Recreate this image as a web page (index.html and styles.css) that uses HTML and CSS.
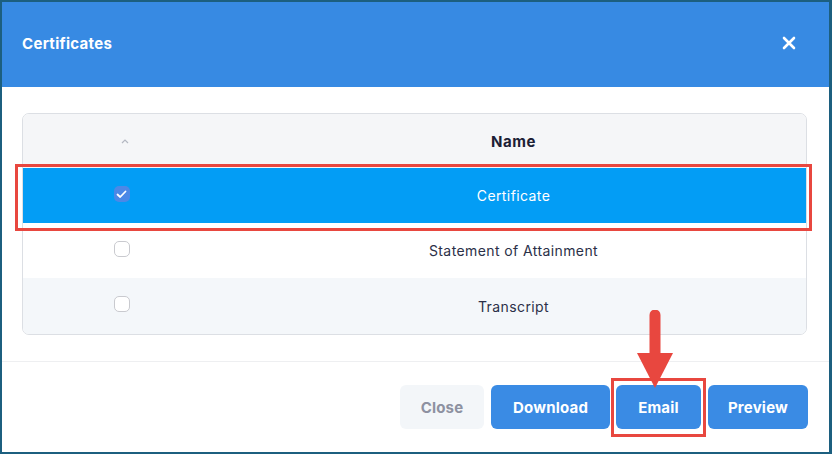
FILE: index.html
```html
<!DOCTYPE html>
<html>
<head>
<meta charset="utf-8">
<link rel="stylesheet" href="styles.css">
</head>
<body>
<div class="modal">
  <div class="modal-header">
    <h1 class="title">Certificates</h1>
    <button class="close-x" aria-label="Close">
      <svg width="14" height="14" viewBox="0 0 14 14"><path d="M2 2 L12 12 M12 2 L2 12" stroke="#fff" stroke-width="2.6" stroke-linecap="round"/></svg>
    </button>
  </div>
  <div class="modal-body">
    <div class="table">
      <div class="row head">
        <div class="cell sel"><svg class="sort" width="8" height="6" viewBox="0 0 8 6"><path d="M1 5 L4 2 L7 5" fill="none" stroke="#b4b8c2" stroke-width="1.2"/></svg></div>
        <div class="cell name">Name</div>
      </div>
      <div class="row selected">
        <div class="cell sel"><span class="check on"><svg width="11" height="9" viewBox="0 0 11 9"><path d="M1.5 4.5 L4.2 7 L9.5 1.5" fill="none" stroke="#fff" stroke-width="1.8" stroke-linecap="round" stroke-linejoin="round"/></svg></span></div>
        <div class="cell name">Certificate</div>
      </div>
      <div class="row">
        <div class="cell sel"><span class="check"></span></div>
        <div class="cell name">Statement of Attainment</div>
      </div>
      <div class="row alt">
        <div class="cell sel"><span class="check"></span></div>
        <div class="cell name">Transcript</div>
      </div>
    </div>
  </div>
  <div class="modal-footer">
    <button class="btn light">Close</button>
    <button class="btn primary">Download</button>
    <button class="btn primary email">Email</button>
    <button class="btn primary">Preview</button>
  </div>
  <div class="mark row-mark"></div>
  <div class="mark btn-mark"></div>
  <svg class="arrow" width="40" height="82" viewBox="0 0 40 82">
    <path d="M20 5 L20 48" stroke="#e8473f" stroke-width="11" stroke-linecap="round"/>
    <path d="M2 43 L38 43 L20 78 Z" fill="#e8473f"/>
  </svg>
</div>
</body>
</html>
```

FILE: styles.css
```css
* { box-sizing: border-box; }
html, body { margin: 0; padding: 0; background: #fff; }
body { font-family: "Inter", "Open Sans", sans-serif; color: #2b3048; }

.modal {
  position: relative;
  width: 832px;
  height: 454px;
  border: 2px solid #1c5f7f;
  border-right-width: 3px;
  background: #fff;
  display: flex;
  flex-direction: column;
}

.modal-header {
  height: 85px;
  background: #378ae3;
  display: flex;
  align-items: center;
  justify-content: space-between;
  padding: 0 33px 0 20px;
}
.title {
  margin: 0;
  color: #fff;
  font-size: 15px;
  font-weight: 700;
  letter-spacing: 0.3px;
  padding-bottom: 2px;
}
.close-x {
  border: 0;
  background: transparent;
  padding: 0;
  width: 14px;
  height: 14px;
  display: flex;
  margin-bottom: 4px;
}

.modal-body {
  padding: 26px 22px 26px 20px;
  border-bottom: 1px solid #eeeff1;
}
.table {
  border: 1px solid #dcdfe4;
  border-radius: 7px;
  overflow: hidden;
}
.row {
  display: flex;
  height: 55px;
  align-items: center;
  background: #fff;
}
.row.head { background: #f5f6f8; height: 54px; }
.row.selected { background: #039df5; color: #fff; }
.row.alt { background: #f4f7fa; height: 56px; }
.cell.sel {
  width: 198px;
  display: flex;
  justify-content: center;
  align-items: center;
}
.cell.name {
  flex: 1;
  text-align: center;
  font-size: 14px;
  letter-spacing: 0.4px;
}
.row.head .cell.name { font-weight: 700; font-size: 15px; color: #1c2035; letter-spacing: 0.6px; }
.row.selected .cell.name { color: #fff; }
.sort { margin-left: 5px; margin-top: -1px; }

.check {
  width: 16px;
  height: 16px;
  border: 1.5px solid #c9cacf;
  border-radius: 5px;
  background: #fff;
  display: flex;
  align-items: center;
  justify-content: center;
  margin-bottom: 4px;
  margin-right: 1px;
}
.check.on {
  border: 0;
  background: #4c88e6;
  border-radius: 5px;
  margin-bottom: 3px;
}

.modal-footer {
  display: flex;
  justify-content: flex-end;
  gap: 7px;
  padding: 23px 21px 0 0;
}
.btn {
  height: 44px;
  border: 0;
  border-radius: 6px;
  font-family: inherit;
  font-size: 15px;
  font-weight: 700;
  letter-spacing: 0.2px;
  padding: 0;
}
.btn.light { background: #f3f6f9; color: #8d91a1; width: 84px; }
.btn.primary { background: #3a8be4; color: #fff; width: 119px; }
.btn.primary.email { width: 85px; margin-left: -1px; }
.btn.primary:last-child { width: 100px; }

.mark {
  position: absolute;
  border: 3px solid #e8473f;
  pointer-events: none;
}
.row-mark { left: 13px; top: 162px; width: 797px; height: 67px; }
.btn-mark { left: 609px; top: 376px; width: 95px; height: 59px; }
.arrow { position: absolute; left: 633px; top: 308px; }
```
